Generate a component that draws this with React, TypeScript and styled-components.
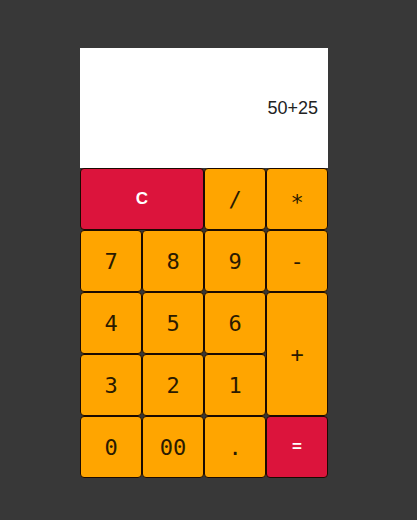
import React from 'react';
import styled, { createGlobalStyle } from 'styled-components';

const GlobalStyle = createGlobalStyle`
  html, body {
    margin: 0;
    padding: 0;
    background-color: #383838;
    min-height: 520px;
  }
`;

type Key = { label: string; red?: boolean; span?: number; rows?: number; drop?: number };

const keys: Key[] = [
  { label: 'C', red: true, span: 2 },
  { label: '/' },
  { label: '*', drop: 6 },
  { label: '7' },
  { label: '8' },
  { label: '9' },
  { label: '-' },
  { label: '4' },
  { label: '5' },
  { label: '6' },
  { label: '+', rows: 2 },
  { label: '3' },
  { label: '2' },
  { label: '1' },
  { label: '0' },
  { label: '00' },
  { label: '.' },
  { label: '=', red: true },
];

const App = () => {
  return (
    <Page>
      <GlobalStyle />
      <Calculator>
        <Display>50+25</Display>
        <Keypad>
          {keys.map((k) => (
            <KeyButton
              key={k.label}
              red={!!k.red}
              span={k.span || 1}
              rows={k.rows || 1}
              drop={k.drop || 0}
            >
              {k.label}
            </KeyButton>
          ))}
        </Keypad>
      </Calculator>
    </Page>
  );
};

export default App;

const Page = styled.div`
  width: 417px;
  height: 520px;
  padding: 48px 0 0 80px;
  box-sizing: border-box;
  background-color: #383838;
`;

const Calculator = styled.div`
  width: 248px;
  display: flex;
  flex-direction: column;
`;

const Display = styled.div`
  height: 120px;
  background-color: #fff;
  display: flex;
  align-items: center;
  justify-content: flex-end;
  padding-right: 10px;
  box-sizing: border-box;
  font-family: "Liberation Sans", Arial, sans-serif;
  font-size: 18px;
  color: #222;
`;

const Keypad = styled.div`
  display: grid;
  grid-template-columns: repeat(4, 62px);
  grid-auto-rows: 62px;
`;

const KeyButton = styled.button<{ red: boolean; span: number; rows: number; drop: number }>`
  grid-column: span ${(p) => p.span};
  grid-row: span ${(p) => p.rows};
  margin: 0;
  padding: ${(p) => p.drop}px 0 0;
  border: 1px solid #1a0a00;
  border-radius: 4px;
  background-color: ${(p) => (p.red ? '#dc143c' : '#ffa500')};
  color: ${(p) => (p.red ? '#fff' : '#2a1a00')};
  font-family: ${(p) =>
    p.red ? '"Liberation Sans", Arial, sans-serif' : '"DejaVu Sans Mono", monospace'};
  font-weight: ${(p) => (p.red ? 700 : 400)};
  font-size: ${(p) => (p.red ? '17px' : '22px')};
  display: flex;
  align-items: center;
  justify-content: center;
  cursor: pointer;
`;
